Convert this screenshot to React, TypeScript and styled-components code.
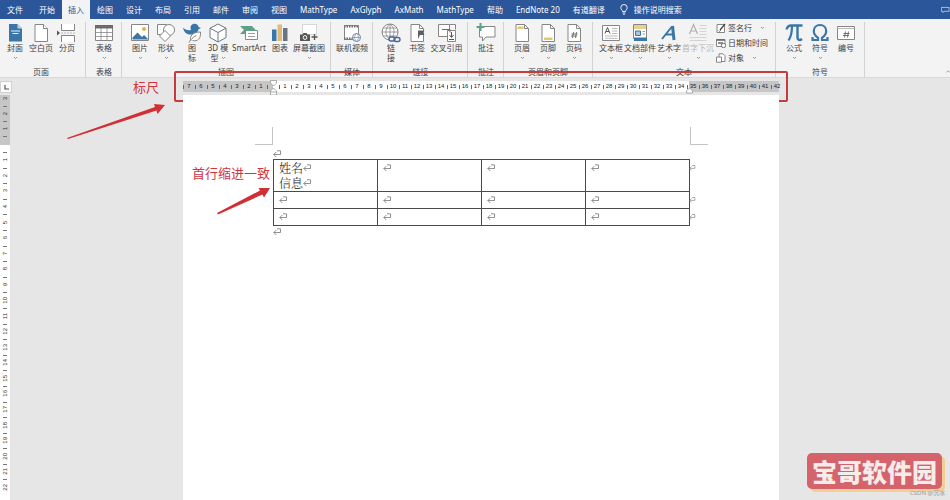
import React from "react";
import styled, { createGlobalStyle, css } from "styled-components";

const GlobalStyle = createGlobalStyle`
  * { box-sizing: border-box; }
  body {
    margin: 0;
    background: #e6e6e6;
    font-family: "Noto Sans", "Noto Sans CJK SC", sans-serif;
    font-size: 8px;
    color: #3f3f3f;
  }
  button {
    margin: 0;
    padding: 0;
    border: 0;
    background: none;
    font: inherit;
    color: inherit;
    cursor: pointer;
  }
`;

const AppWindow = styled.div`
  position: relative;
  display: flex;
  flex-direction: column;
  min-height: 100vh;
  overflow: hidden;
`;

/* ---------- tab strip ---------- */

const TabStrip = styled.nav`
  display: flex;
  align-items: stretch;
  gap: 1px;
  height: 19px;
  padding-left: 1px;
  background: #2b579a;
  color: #fff;
`;

const Tab = styled.button<{ $active?: boolean; $file?: boolean }>`
  padding: 0 6px;
  line-height: 18px;
  white-space: nowrap;
  ${(p) => p.$file && css`margin-right: 3px;`}
  ${(p) => p.$active && css`background: #f3f3f3; color: #2b579a;`}
`;

const TellMe = styled.button`
  display: flex;
  align-items: center;
  gap: 6px;
  margin-left: 8px;
  white-space: nowrap;
`;

const CommentsButton = styled.button`
  display: flex;
  align-items: center;
  width: 9px;
  margin-left: auto;
  overflow: hidden;
`;

/* ---------- ribbon ---------- */

const Ribbon = styled.div`
  display: flex;
  height: 59px;
  background: #f3f3f3;
  border-bottom: 1px solid #dadada;
`;

const Group = styled.section<{ $first?: boolean; $roomy?: boolean }>`
  display: flex;
  flex-direction: column;
  justify-content: space-between;
  flex: none;
  margin-top: 3px;
  padding: 1px ${(p) => (p.$roomy ? 5 : 4)}px 0 ${(p) => (p.$first ? 2 : 5)}px;
  border-right: 1px solid #d2d2d2;
`;

const GroupItems = styled.div`
  display: flex;
  align-items: flex-start;
`;

const GroupName = styled.div`
  text-align: center;
  line-height: 10px;
`;

const Tool = styled.button<{ $wide?: number; $disabled?: boolean }>`
  display: flex;
  flex-direction: column;
  align-items: center;
  flex: none;
  width: ${(p) => p.$wide ?? 26}px;
  line-height: 10px;
  white-space: nowrap;
  ${(p) => p.$disabled && css`color: #b5b5b5;`}
`;

const SecondLine = styled.span`
  display: flex;
  align-items: center;
  gap: 2px;
  height: 10px;
`;

const SmallTools = styled.div`
  display: flex;
  flex-direction: column;
  width: 56px;
  margin-top: -3px;
  padding-left: 2px;
`;

const SmallTool = styled.button`
  display: flex;
  align-items: center;
  gap: 2px;
  height: 15px;
  white-space: nowrap;
`;

const ChevronSlot = styled.span`
  display: flex;
  padding-left: 6px;
`;

const Collapse = styled.button`
  display: flex;
  align-items: flex-end;
  width: 4px;
  margin-left: auto;
  padding-bottom: 3px;
  overflow: hidden;
`;

/* ---------- work area ---------- */

const Work = styled.main`
  display: flex;
  flex: 1;
`;

const SideColumn = styled.aside`
  display: flex;
  flex-direction: column;
  flex: none;
  width: 10px;
`;

const TabStop = styled.button`
  display: flex;
  align-items: center;
  justify-content: center;
  width: 12px;
  height: 12px;
  margin: 3px 0 2px;
  background: #fcfcfc;
  border: 1px solid #d0d0d0;
`;

const SideMargin = styled.div`
  display: flex;
  flex-direction: column;
  justify-content: flex-end;
  height: 50px;
  overflow: hidden;
  background: #c6c6c6;
`;

const SideBody = styled.div`
  display: flex;
  flex-direction: column;
  flex: 1;
  padding: 7px 0 5px;
  background: #fff;
`;

const SideCell = styled.div<{ $tall?: number }>`
  display: flex;
  flex: ${(p) => (p.$tall ? `0 0 ${p.$tall}px` : "1 1 0")};
  min-height: 0;
  align-items: center;
  justify-content: center;
  font: 6px/8px "Liberation Sans", sans-serif;
  color: #333;
  background: linear-gradient(#777, #777) center top / 4px 1px no-repeat;
`;

const SideNumber = styled.span`
  writing-mode: vertical-rl;
  transform: rotate(180deg);
`;

const Canvas = styled.div`
  flex: 1;
  padding: 3px 0 0 2px;
  display: flex;
  flex-direction: column;
  align-items: center;
`;

const RulerFrame = styled.div`
  position: relative;
  width: 596px;
  height: 11px;
  margin-bottom: 3px;
`;

const Ruler = styled.div`
  display: flex;
  height: 11px;
  background: linear-gradient(to right, #c6c6c6 90px, #fff 90px, #fff 506px, #c6c6c6 506px);
`;

const RulerCell = styled.div`
  display: flex;
  align-items: center;
  justify-content: center;
  flex: none;
  width: 12px;
  height: 11px;
  font: 6px/11px "Liberation Sans", sans-serif;
  color: #222;
  background: linear-gradient(#666, #666) left center / 1px 4px no-repeat;
`;

const Marker = styled.svg<{ $x: number }>`
  position: absolute;
  top: -1px;
  left: ${(p) => p.$x}px;
`;

const Highlight = styled.div`
  position: absolute;
  inset: -10px -9px -10px;
  border: 2px solid #c43c3e;
  border-radius: 2px;
`;

const Page = styled.article`
  position: relative;
  flex: 1;
  width: 596px;
  padding: 32px 90px 0;
  background: #fff;
`;

const CropMarks = styled.div`
  display: flex;
  justify-content: space-between;
  margin: 0 -19px 3px -18px;
`;

const CropMark = styled.span<{ $side: "left" | "right" }>`
  width: 18px;
  height: 18px;
  border-bottom: 1px solid #c4c4c4;
  ${(p) => (p.$side === "left" ? css`border-right: 1px solid #c4c4c4;` : css`border-left: 1px solid #c4c4c4;`)}
`;

const Paragraph = styled.p`
  display: flex;
  align-items: center;
  height: 11px;
  margin: 0;
`;

const DocTable = styled.table`
  width: 417px;
  table-layout: fixed;
  border-collapse: collapse;
  font-family: "Noto Serif CJK SC", "Liberation Serif", "Noto Sans CJK SC", serif;
  font-weight: 300;
  font-size: 12px;
  line-height: 15px;
  color: #111;
`;

const Cell = styled.td`
  position: relative;
  height: 16px;
  padding: 0 0 1px 5px;
  border: 1px solid #4a4a4a;
  vertical-align: top;
`;

const CellLine = styled.div`
  display: flex;
  align-items: center;
  height: 15px;
`;

const RowEnd = styled.span`
  position: absolute;
  top: 0;
  left: 100%;
  display: flex;
  align-items: center;
  width: 7px;
  height: 15px;
  overflow: hidden;
`;

const Note = styled.div<{ $x: number; $y: number }>`
  position: absolute;
  left: ${(p) => p.$x}px;
  top: ${(p) => p.$y}px;
  font-size: 13px;
  line-height: 16px;
  color: #d2343f;
  white-space: nowrap;
`;

const Arrow = styled.svg<{ $x: number; $y: number }>`
  position: absolute;
  left: ${(p) => p.$x}px;
  top: ${(p) => p.$y}px;
`;

const Badge = styled.div`
  position: absolute;
  right: 8px;
  bottom: 11px;
  padding: 0 5px;
  border-radius: 5px;
  background: #d5636b;
  box-shadow: 3px 3px 0 #f3cf95;
  color: #f6ecea;
  font: 900 25px/36px "Noto Sans CJK SC", sans-serif;
  white-space: nowrap;
`;

const Credit = styled.div`
  position: absolute;
  right: 5px;
  bottom: 3px;
  font-size: 6px;
  line-height: 8px;
  color: #a39a92;
`;

/* ---------- drawings ---------- */

const Chevron = () => (
  <svg width="5" height="4" viewBox="0 0 5 4" fill="none" stroke="#777" strokeWidth="0.8">
    <path d="M1 1l1.5 1.5L4 1" />
  </svg>
);

const ReturnMark = () => (
  <svg width="9" height="8" viewBox="0 0 9 8" fill="none" stroke="#858585" strokeWidth="0.9">
    <path d="M4 .8H7.500V4.500H.8M3.300 2L.8 4.500L3.300 7" />
  </svg>
);

const line = "#868686";
const blue = "#3a76a8";
const green = "#5f9f86";
const sheet = "M4 1.5h8.5l4 4V18.5H4z";
const fold = "M12.5 1.5v4h4";

const icons: Record<string, React.ReactNode> = {
  cover: (
    <>
      <path d="M4 1h8.5l4.500 4.500V18.500H4z" fill={blue} />
      <path d="M12.500 1v4.500H17z" fill="#b9d3e6" />
      <path d="M6 8h9M7.500 10.500h6" stroke="#e8f1f8" />
    </>
  ),
  blank: (
    <g fill="#fff" stroke={line}>
      <path d={sheet} />
      <path d={fold} />
    </g>
  ),
  pageBreak: (
    <g fill="#fff" stroke={line}>
      <path d="M4.500 1v6.500h13V1M4.500 19v-6.500h13V19" />
      <path d="M4 10h15" stroke="#bbb" strokeDasharray="2 1" />
      <path d="M0 7.500l3 2.500-3 2.500z" fill="#555" stroke="none" />
    </g>
  ),
  table: (
    <>
      <path d="M1.500 2.500h17v15h-17z" fill="#fff" stroke={line} />
      <path d="M1 2h18v3.500H1z" fill="#6a6a6a" />
      <path d="M1.500 9.500h17M1.500 13.500h17M7 5v12.500M13 5v12.500" stroke={line} strokeWidth="0.800" />
    </>
  ),
  picture: (
    <>
      <path d="M1.500 1.500h17v16h-17z" fill="#fff" stroke={line} />
      <path d="M2.500 16.500v-2l5-5 4.500 4.500 2-2 4 4v.5z" fill={blue} />
      <circle cx="14" cy="6" r="2" fill="#e3b04e" />
    </>
  ),
  shapes: (
    <g fill="#fff" stroke={line}>
      <path d="M1.500 1.500h9v10h-9z" />
      <circle cx="13" cy="7" r="5.500" />
      <path d="M9 7.500l5.500 5.500L9 18.500 3.500 13z" />
    </g>
  ),
  glyphs: (
    <>
      <path d="M1 4.500c2 2.500 5 3 8 2.500C7.500 3 10 .5 13 .8c2.500.2 3.500 1.800 3.500 3.200l2.500 1-2.500 1.200C16 9 14.500 10 12 11 6 13 2 10 1 4.500z" fill={blue} />
      <path d="M9 18c-2-5 2-9 9.500-9 .5 6-2.500 10-8 8.500M7 19.500c1.500-3 4-5.500 7.500-7" fill="#fff" stroke={line} />
    </>
  ),
  cube: (
    <g fill="#fff" stroke="#667786" strokeLinejoin="round">
      <path d="M10 1l8 4.200v9.300L10 19l-8-4.500V5.200z" />
      <path d="M2 5.200l8 4.300 8-4.300M10 9.500V19" />
    </g>
  ),
  smartArt: (
    <>
      <path d="M1 3h12l4 4.500-3 3.500H1l4-4z" fill={green} />
      <path d="M6.500 7.500h12v9h-12z" fill="#fff" stroke={green} />
      <path d="M9 10.500h7M9 13.500h7" stroke={line} strokeWidth="0.800" />
    </>
  ),
  chart: (
    <>
      <path d="M2 6.500h4.500V18H2z" fill={blue} />
      <path d="M7.500 1.500H12V18H7.500z" fill="#e0bb75" />
      <path d="M13 5h4.500v13H13z" fill="#6b7480" />
    </>
  ),
  screenshot: (
    <>
      <path d="M3.500 1.500h14v10h-14z" fill="#fff" stroke="#b5b5b5" strokeDasharray="1 1" />
      <path d="M1 11.500h2.500l1-1.500h3l1 1.500H11V18H1z" fill="#555" />
      <circle cx="6" cy="14.500" r="1.900" fill="#555" stroke="#fff" />
      <path d="M15.500 11v6M12.500 14h6" stroke="#555" strokeWidth="1.300" />
    </>
  ),
  video: (
    <>
      <path d="M2.500 2.500h14v14h-14z" fill="#fff" stroke={line} />
      <path d="M2 3.500h15M2 15.500h9" stroke="#666" strokeWidth="2" strokeDasharray="1.500 1" />
      <circle cx="14.500" cy="14.500" r="4" fill="#fff" stroke="#6d87a8" />
      <path d="M10.500 14.500h8M14.500 10.500c-2.500 2.500-2.500 5.500 0 8M14.500 10.500c2.500 2.500 2.500 5.500 0 8" stroke="#6d87a8" strokeWidth="0.700" />
    </>
  ),
  link: (
    <>
      <circle cx="9" cy="9" r="8" fill="#fff" stroke={line} />
      <path d="M1 9h16M2.500 5h13M2.500 13h13M9 1v16M9 1C3.500 5.500 3.500 12.500 9 17M9 1c5.500 4.500 5.500 11.500 0 16" stroke={line} strokeWidth="0.800" />
      <rect x="8" y="14" width="6" height="4" rx="2" fill="#f3f3f3" stroke="#4c6594" strokeWidth="1.400" />
      <rect x="13" y="14.500" width="6" height="4" rx="2" stroke="#4c6594" strokeWidth="1.400" />
    </>
  ),
  bookmark: (
    <>
      <path d={sheet} fill="#fff" stroke={line} />
      <path d={fold} stroke={line} />
      <path d="M11 7.500h6.500l-1.500 2 1.500 2.500h-4.500l-2 4z" fill="#5a5f68" />
    </>
  ),
  crossRef: (
    <g fill="#fff" stroke={line}>
      <path d="M1.500 1.500h11v12h-11zM12.500 1.500h6v5" />
      <path d="M10.500 7.500h8v11h-8z" />
      <path d="M5 6.500h8v3" fill="none" stroke="#a94e50" />
      <path d="M14.500 9v5M12.500 12l2 2.500 2-2.500M12 16.500h5" fill="none" stroke="#555" />
    </g>
  ),
  comment: (
    <>
      <path d="M3.500 3.500h15.500v10.500h-9l-3.500 4v-4h-3z" fill="#fff" stroke={line} />
      <path d="M4.500 0v8M.5 4h8" stroke={green} strokeWidth="2" />
    </>
  ),
  header: (
    <>
      <path d={sheet} fill="#fff" stroke={line} />
      <path d="M5.500 3.500h6v2.500h-6z" fill="#e3c576" />
      <path d={fold} stroke={line} />
    </>
  ),
  footer: (
    <>
      <path d={sheet} fill="#fff" stroke={line} />
      <path d={fold} stroke={line} />
      <path d="M6 14.500h8.500V17H6z" fill="#dfc973" />
    </>
  ),
  pageNumber: (
    <>
      <path d={sheet} fill="#fff" stroke={line} />
      <path d={fold} stroke={line} />
      <path d="M9.500 9l-1 6M12.500 9l-1 6M7.500 11h6M7 13h6" stroke="#555" strokeWidth="0.800" />
    </>
  ),
  textBox: (
    <>
      <path d="M1.500 2.500h17v15h-17z" fill="#fff" stroke={line} />
      <path d="M4 10.500l2.500-6 2.500 6M5 8.500h3" stroke="#456" />
      <path d="M11 5.500h5.500M11 8h5.500M11 10.500h5.500M4 13h12.500M4 15.300h12.500" stroke="#aaa" strokeWidth="0.800" />
    </>
  ),
  parts: (
    <>
      <path d="M3.500 1.500h13v14h-13z" fill="#fff" stroke={line} />
      <path d="M4 2h12v4H4z" fill="#e7d28b" />
      <path d="M5.500 8h5v4.500h-5z" fill="#a9c8dd" stroke={blue} />
      <path d="M12.500 8.500h2.500M12.500 11h2.500" stroke={line} strokeWidth="0.800" />
      <path d="M4 14.500h13V18H4z" fill={blue} />
    </>
  ),
  wordArt: (
    <>
      <path d="M3 16L13 3.500" stroke={blue} strokeWidth="2" />
      <path d="M13.500 3L15 17" stroke={blue} strokeWidth="3" />
      <path d="M7 11.500h7" stroke={blue} strokeWidth="2" />
    </>
  ),
  dropCap: (
    <>
      <path d="M1.500 11L5.500 1.500 9.500 11M3 8h5" stroke="#b0b0b0" strokeWidth="1.200" />
      <path d="M11.500 2.500h7M11.500 5.500h7M11.500 8.500h7M11.500 11.500h7M1.500 14.500h17M1.500 17.500h17" stroke="#d4d4d4" />
    </>
  ),
  equation: (
    <g stroke={blue}>
      <path d="M2.500 6.500C3.500 3 5 2.500 7 2.500h11.500" strokeWidth="2.400" />
      <path d="M8 3c0 6-.5 10-3.500 14.500" strokeWidth="2.200" />
      <path d="M13.500 3v11c0 3.500 2.500 3.500 4.500 2" strokeWidth="2.400" />
    </g>
  ),
  symbol: (
    <path d="M2.500 14v3H8v-2.200C4.500 12.500 3.800 10.500 3.800 8c0-3.500 2.500-6 6.200-6s6.200 2.500 6.200 6c0 2.500-.7 4.500-4.200 6.800V17h5.500v-3" stroke={blue} strokeWidth="2.200" />
  ),
  number: (
    <>
      <path d="M1.500 3.500h17v13h-17z" fill="#fff" stroke={line} />
      <path d="M1.500 5.500h17" stroke="#bbb" />
      <path d="M9.500 8.500l-1 6M12.500 8.500l-1 6M7.500 10.500h6M7 12.500h6" stroke="#555" strokeWidth="0.800" />
    </>
  ),
};

const Icon = ({ name }: { name: string }) => (
  <svg width="20" height="20" viewBox="0 0 20 20" fill="none" aria-hidden="true">
    {icons[name]}
  </svg>
);

const smallIcons: Record<string, React.ReactNode> = {
  signature: (
    <>
      <path d="M1 1.500h7.500v8H1z" fill="#fff" stroke={line} />
      <path d="M4 7l5-6" stroke="#444" strokeWidth="1.300" />
      <path d="M2.500 7.500l1 1 1.500-1.500" stroke="#555" strokeWidth="0.800" />
    </>
  ),
  date: (
    <>
      <path d="M.5 1.500h8.500v7H.5z" fill="#fff" stroke={line} />
      <path d="M.5 2h8.500M2 5h5" stroke="#666" strokeWidth="1.500" />
      <circle cx="7.500" cy="7.500" r="2.200" fill="#fff" stroke="#555" strokeWidth="0.800" />
    </>
  ),
  object: (
    <>
      <path d="M3 .8h4l2 2v5.700H3z" fill="#fff" stroke={line} />
      <path d="M.5 4h5v5.200h-5z" fill="#fff" stroke={line} />
    </>
  ),
};

const SmallIcon = ({ name }: { name: string }) => (
  <svg width="10" height="10" viewBox="0 0 10 10" fill="none" aria-hidden="true">
    {smallIcons[name]}
  </svg>
);

/* ---------- data ---------- */

interface ToolDef {
  icon: string;
  label: string;
  second?: string;
  menu?: boolean;
  wide?: number;
  disabled?: boolean;
}

interface GroupDef {
  name: string;
  roomy?: boolean;
  tools: ToolDef[];
  small?: { icon: string; label: string; menu?: boolean }[];
}

const tabs = [
  "文件", "开始", "插入", "绘图", "设计", "布局", "引用", "邮件", "审阅", "视图",
  "MathType", "AxGlyph", "AxMath", "MathType", "帮助", "EndNote 20", "有道翻译",
];

const groups: GroupDef[] = [
  {
    name: "页面",
    roomy: true,
    tools: [
      { icon: "cover", label: "封面", menu: true },
      { icon: "blank", label: "空白页" },
      { icon: "pageBreak", label: "分页" },
    ],
  },
  { name: "表格", tools: [{ icon: "table", label: "表格", menu: true }] },
  {
    name: "插图",
    roomy: true,
    tools: [
      { icon: "picture", label: "图片", menu: true },
      { icon: "shapes", label: "形状", menu: true },
      { icon: "glyphs", label: "图", second: "标" },
      { icon: "cube", label: "3D 模", second: "型", menu: true },
      { icon: "smartArt", label: "SmartArt", wide: 36 },
      { icon: "chart", label: "图表" },
      { icon: "screenshot", label: "屏幕截图", menu: true, wide: 32 },
    ],
  },
  { name: "媒体", tools: [{ icon: "video", label: "联机视频", wide: 32 }] },
  {
    name: "链接",
    tools: [
      { icon: "link", label: "链", second: "接" },
      { icon: "bookmark", label: "书签" },
      { icon: "crossRef", label: "交叉引用", wide: 33 },
    ],
  },
  { name: "批注", tools: [{ icon: "comment", label: "批注" }] },
  {
    name: "页眉和页脚",
    roomy: true,
    tools: [
      { icon: "header", label: "页眉", menu: true },
      { icon: "footer", label: "页脚", menu: true },
      { icon: "pageNumber", label: "页码", menu: true },
    ],
  },
  {
    name: "文本",
    roomy: true,
    tools: [
      { icon: "textBox", label: "文本框", menu: true },
      { icon: "parts", label: "文档部件", menu: true, wide: 32 },
      { icon: "wordArt", label: "艺术字", menu: true },
      { icon: "dropCap", label: "首字下沉", menu: true, wide: 32, disabled: true },
    ],
    small: [
      { icon: "signature", label: "签名行", menu: true },
      { icon: "date", label: "日期和时间" },
      { icon: "object", label: "对象", menu: true },
    ],
  },
  {
    name: "符号",
    roomy: true,
    tools: [
      { icon: "equation", label: "公式", menu: true },
      { icon: "symbol", label: "符号", menu: true },
      { icon: "number", label: "编号" },
    ],
  },
];

const rulerNumbers = Array.from({ length: 50 }, (_, i) => Math.abs(i - 7));
const sideNumbers = Array.from({ length: 22 }, (_, i) => i + 1);
const rows: string[][] = [["姓名", "信息"], [""], [""]];

export default function App() {
  return (
    <AppWindow>
      <GlobalStyle />
      <TabStrip>
        {tabs.map((t, i) => (
          <Tab key={i} $file={i === 0} $active={i === 2}>{t}</Tab>
        ))}
        <TellMe>
          <svg width="8" height="11" viewBox="0 0 8 11" fill="none" stroke="#fff" strokeWidth="0.900">
            <path d="M2.500 7.500C2.500 6 .8 5.500 .8 3.700a3.200 3.200 0 0 1 6.400 0C7.200 5.500 5.500 6 5.500 7.500zM2.600 9h2.800M3.200 10.300h1.600" />
          </svg>
          操作说明搜索
        </TellMe>
        <CommentsButton aria-label="批注">
          <svg width="14" height="10" viewBox="0 0 14 10" fill="none" stroke="#fff" strokeWidth="0.900">
            <path d="M.5 1h12v6H5L3 9V7H.5z" />
          </svg>
        </CommentsButton>
      </TabStrip>

      <Ribbon>
        {groups.map((g, i) => (
          <Group key={g.name} $first={i === 0} $roomy={g.roomy}>
            <GroupItems>
              {g.tools.map((t) => (
                <Tool key={t.icon} $wide={t.wide} $disabled={t.disabled}>
                  <Icon name={t.icon} />
                  <span>{t.label}</span>
                  <SecondLine>
                    {t.second}
                    {t.menu && <Chevron />}
                  </SecondLine>
                </Tool>
              ))}
              {g.small && (
                <SmallTools>
                  {g.small.map((s) => (
                    <SmallTool key={s.icon}>
                      <SmallIcon name={s.icon} />
                      {s.label}
                      {s.menu && <ChevronSlot><Chevron /></ChevronSlot>}
                    </SmallTool>
                  ))}
                </SmallTools>
              )}
            </GroupItems>
            <GroupName>{g.name}</GroupName>
          </Group>
        ))}
        <Collapse aria-label="折叠功能区">
          <svg width="8" height="5" viewBox="0 0 8 5" fill="none" stroke="#555">
            <path d="M.5 4.500L4 1l3.500 3.500" />
          </svg>
        </Collapse>
      </Ribbon>

      <Work>
        <SideColumn>
          <TabStop aria-label="制表符">
            <svg width="5" height="5" viewBox="0 0 5 5" fill="none" stroke="#555" strokeWidth="1.200">
              <path d="M1 0v4h4" />
            </svg>
          </TabStop>
          <SideMargin>
            {[3, 2, 1].map((n) => (
              <SideCell key={n} $tall={15}><SideNumber>{n}</SideNumber></SideCell>
            ))}
            <SideCell $tall={9} />
          </SideMargin>
          <SideBody>
            {sideNumbers.map((n) => (
              <SideCell key={n}><SideNumber>{n}</SideNumber></SideCell>
            ))}
          </SideBody>
        </SideColumn>

        <Canvas>
          <RulerFrame>
            <Ruler>
              {rulerNumbers.map((n, i) => (
                <RulerCell key={i}>{n || ""}</RulerCell>
              ))}
            </Ruler>
            <Marker $x={87} width="7" height="16" viewBox="0 0 7 16" fill="#fff" stroke="#999" strokeWidth="0.800">
              <path d="M.5.500h6v2.500l-3 3-3-3zM3.500 8l3 3v4h-6v-4zM.5 12h6" />
            </Marker>
            <Marker $x={503} width="7" height="16" viewBox="0 0 7 16" fill="#fff" stroke="#999" strokeWidth="0.800">
              <path d="M3.500 8l3 3v2h-6v-2z" />
            </Marker>
            <Highlight />
          </RulerFrame>

          <Page>
            <CropMarks>
              <CropMark $side="left" />
              <CropMark $side="right" />
            </CropMarks>
            <Paragraph><ReturnMark /></Paragraph>
            <DocTable>
              <tbody>
                {rows.map((lines, r) => (
                  <tr key={r}>
                    {[0, 1, 2, 3].map((c) => (
                      <Cell key={c}>
                        {(c === 0 ? lines : [""]).map((text, k) => (
                          <CellLine key={k}>{text}<ReturnMark /></CellLine>
                        ))}
                        {c === 3 && <RowEnd><ReturnMark /></RowEnd>}
                      </Cell>
                    ))}
                  </tr>
                ))}
              </tbody>
            </DocTable>
            <Paragraph><ReturnMark /></Paragraph>

            <Note $x={-50} $y={-16}>标尺</Note>
            <Arrow $x={-116} $y={7} width="98" height="38" viewBox="0 0 98 38" fill="#d02f33">
              <path d="M0 36L88 5 87 2l11 1-7.500 9-1-3.500L1 37z" />
            </Arrow>
            <Note $x={9} $y={70}>首行缩进一致</Note>
            <Arrow $x={34} $y={92} width="54" height="28" viewBox="0 0 54 28" fill="#d02f33">
              <path d="M0 26L43 3.500 41.500 1 53 1l-6 9.500-1.500-3L1 27.500z" />
            </Arrow>
          </Page>
        </Canvas>
      </Work>

      <Badge>宝哥软件园</Badge>
      <Credit>CSDN @沉冰</Credit>
    </AppWindow>
  );
}
